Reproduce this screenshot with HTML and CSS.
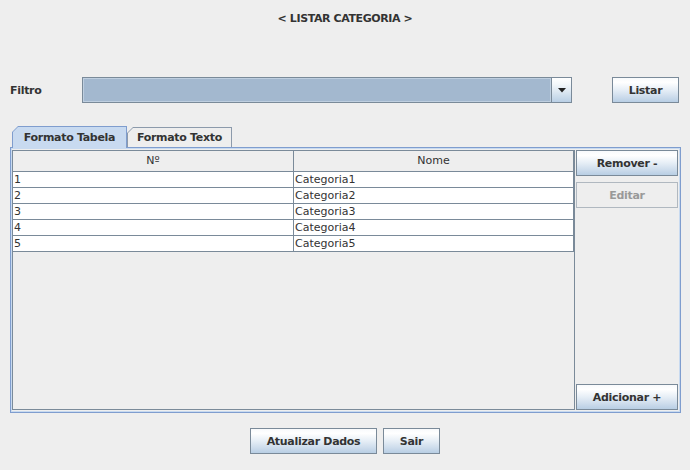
FILE: index.html
```html
<!DOCTYPE html>
<html>
<head>
<meta charset="utf-8">
<link rel="stylesheet" href="styles.css">
</head>
<body>
<div class="title">&lt; LISTAR CATEGORIA &gt;</div>
<div class="filter">
  <span class="label">Filtro</span>
  <div class="combo">
    <div class="combo-field"></div>
    <div class="combo-arrow"><svg width="8" height="5" viewBox="0 0 8 5"><path d="M0 0h8L4 4.5z" fill="#222"/></svg></div>
  </div>
  <button class="btn listar">Listar</button>
</div>
<div class="tabs">
  <div class="tab active"><span>Formato Tabela</span></div>
  <div class="tab"><span>Formato Texto</span></div>
</div>
<div class="panel">
  <div class="table">
    <div class="row head"><div class="cell">Nº</div><div class="cell">Nome</div></div>
    <div class="row"><div class="cell">1</div><div class="cell">Categoria1</div></div>
    <div class="row"><div class="cell">2</div><div class="cell">Categoria2</div></div>
    <div class="row"><div class="cell">3</div><div class="cell">Categoria3</div></div>
    <div class="row"><div class="cell">4</div><div class="cell">Categoria4</div></div>
    <div class="row"><div class="cell">5</div><div class="cell">Categoria5</div></div>
  </div>
  <div class="side">
    <button class="btn">Remover -</button>
    <button class="btn disabled" disabled>Editar</button>
    <button class="btn push">Adicionar +</button>
  </div>
</div>
<div class="actions">
  <button class="btn atualizar">Atualizar Dados</button>
  <button class="btn sair">Sair</button>
</div>
</body>
</html>
```
FILE: styles.css
```css
html, body {
  margin: 0;
  padding: 0;
}
body {
  width: 690px;
  height: 470px;
  overflow: hidden;
  background: #eeeeee;
  font-family: "DejaVu Sans", "Noto Sans", sans-serif;
  font-size: 11px;
  color: #333333;
}
.title {
  padding-top: 12px;
  height: 14px;
  line-height: 14px;
  text-align: center;
  font-weight: bold;
  letter-spacing: -0.4px;
}
.filter {
  display: flex;
  align-items: center;
  margin-top: 51px;
  height: 26px;
  padding-left: 10px;
}
.label {
  width: 72px;
  font-weight: bold;
  letter-spacing: -0.3px;
}
.combo {
  width: 490px;
  height: 26px;
  box-sizing: border-box;
  border: 1px solid #7a8a99;
  display: flex;
}
.combo-field {
  flex: 1;
  background: #a3b8cf;
  box-shadow: inset 0 0 0 1px #bfcfe0;
}
.combo-arrow {
  width: 19px;
  border-left: 1px solid #7a8a99;
  background: linear-gradient(#ffffff 0%, #f4f8fb 25%, #dae6f1 60%, #b9cfe5 100%);
  display: flex;
  align-items: center;
  justify-content: center;
}
.btn {
  box-sizing: border-box;
  height: 26px;
  margin: 0;
  padding: 0;
  border: 1px solid #7a8a99;
  background: linear-gradient(#f8fafc 0%, #ffffff 18%, #e6eef6 50%, #cddcec 78%, #b8cee4 100%);
  font-family: "DejaVu Sans", "Noto Sans", sans-serif;
  font-size: 11px;
  font-weight: bold;
  letter-spacing: -0.3px;
  color: #333333;
}
.listar {
  margin-left: 40px;
  width: 67px;
}
.tabs {
  display: flex;
  align-items: flex-end;
  margin-top: 23px;
  padding-left: 12px;
  height: 21px;
  position: relative;
  z-index: 1;
}
.tab {
  box-sizing: border-box;
  height: 20px;
  padding: 1px 1px 0 1px;
  background: #8c9aab;
  clip-path: polygon(6px 0, 100% 0, 100% 100%, 0 100%, 0 6px);
}
.tab span {
  display: flex;
  align-items: center;
  justify-content: center;
  height: 100%;
  background: #eeeeee;
  clip-path: polygon(5px 0, 100% 0, 100% 100%, 0 100%, 0 5px);
  font-weight: bold;
  letter-spacing: -0.3px;
}
.tab.active {
  width: 115px;
  height: 22px;
  margin-bottom: -1px;
  background: #7f9dce;
  padding-bottom: 0;
}
.tab.active span {
  background: #c8daf0;
}
.tab:not(.active) {
  width: 105px;
  padding-bottom: 0;
  background: #8c9aab;
}
.panel {
  box-sizing: border-box;
  margin-left: 10px;
  width: 671px;
  height: 266px;
  border: 1px solid #7f9dce;
  box-shadow: inset 0 0 0 1px #c8daf0;
  padding: 2px 2px 2px 1px;
  display: flex;
}
.table {
  box-sizing: border-box;
  width: 563px;
  height: 100%;
  border: 1px solid #7a8a99;
  background: #eeeeee;
}
.row {
  display: flex;
  height: 16px;
}
.row .cell {
  box-sizing: border-box;
  height: 16px;
  border-right: 1px solid #7a8a99;
  border-bottom: 1px solid #7a8a99;
  background: #ffffff;
  padding-left: 1px;
  line-height: 15px;
  white-space: nowrap;
}
.row .cell:first-child {
  width: 281px;
}
.row .cell:last-child {
  width: 280px;
}
.row.head {
  height: 21px;
}
.row.head .cell {
  height: 21px;
  line-height: 20px;
  background: #eeeeee;
  text-align: center;
  padding-left: 0;
}
.side {
  width: 102px;
  margin-left: 1px;
  display: flex;
  flex-direction: column;
}
.side .btn {
  width: 102px;
}
.side .disabled {
  margin-top: 6px;
  background: #eeeeee;
  border-color: #b0b8c0;
  color: #999999;
}
.side .push {
  margin-top: auto;
}
.actions {
  display: flex;
  justify-content: center;
  gap: 6px;
  margin-top: 15px;
}
.atualizar {
  width: 127px;
}
.sair {
  width: 57px;
}
```
